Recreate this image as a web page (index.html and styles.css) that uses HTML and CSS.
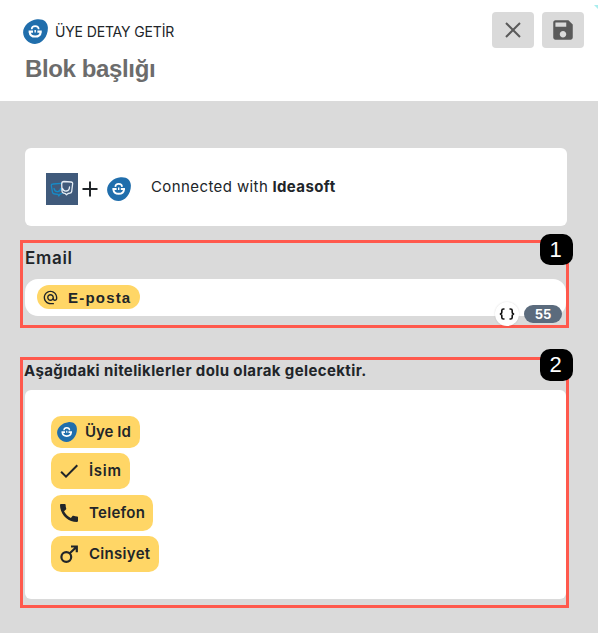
FILE: index.html
```html
<!DOCTYPE html>
<html lang="tr">
<head>
    <meta charset="UTF-8">
    <title>Üye Detay Getir</title>
    <link rel="stylesheet" href="styles.css">
</head>
<body>
    <svg class="sprite">
        <symbol id="ideasoft" viewBox="0 0 24 24">
            <path fill="#206eac" d="M13.500 .2C20 -.4 23.800 3 23.900 8.500C24 17 18 24 11.500 24C5.500 24 .3 19 .1 13C0 6.500 6.500 .8 13.500 .2Z"/>
            <g fill="none" stroke="#fff">
                <path stroke-width="1.600" d="M8.300 9.900C8.500 5.900 14.900 5.900 15.100 9.900"/>
                <path stroke-width="1.400" d="M11.700 10.500v2.500"/>
                <path stroke-width="2" d="M5.400 12.100H9.600M13.800 12.100h4.200M6.400 12.500C7 18.300 16.400 18.300 17 12.500"/>
            </g>
        </symbol>
    </svg>

    <header class="header">
        <div class="header-info">
            <div class="block-type">
                <svg class="block-logo"><use href="#ideasoft"/></svg>
                <span class="block-name">ÜYE DETAY GETİR</span>
            </div>
            <div class="block-title">Blok başlığı</div>
        </div>
        <div class="header-buttons">
            <button class="icon-btn">
                <svg width="24" height="24" viewBox="0 0 24 24"><path d="M5 5l14 14M19 5l-14 14" stroke="#5a5a5a" stroke-width="2" fill="none"/></svg>
            </button>
            <button class="icon-btn">
                <svg width="26" height="26" viewBox="0 0 24 24"><path fill="#5a5a5a" d="M17 3H5c-1.110 0-2 .9-2 2v14c0 1.100.89 2 2 2h14c1.100 0 2-.9 2-2V7l-4-4zm-5 16c-1.660 0-3-1.340-3-3s1.340-3 3-3 3 1.340 3 3-1.340 3-3 3zm3-10H5V5h10v4z"/></svg>
            </button>
        </div>
        <span class="corner"></span>
    </header>

    <main class="content">
        <div class="connection">
            <svg class="app-logo" viewBox="0 0 32 32" fill="none" stroke-linecap="round" stroke-linejoin="round">
                <rect width="32" height="32" fill="#405a7b"/>
                <path stroke="#168bc8" stroke-width="1.300" d="M15 10.300L7 11Q5 11 5.400 13L6.500 19.500Q7 21 9 21L12 21.300L12.800 23L14 21.200L16 20.500M8 15.500Q9 19 12 18.500Q14.500 18 14.500 15.500"/>
                <path stroke="#e5edf5" stroke-width="1.300" d="M18 8.500L25 9Q27 9.300 26.600 11L25.700 18.500Q25.400 20 24 20.200L22 20.500L20.500 21.800L19.500 20.700L17.500 20Q16 19.700 16 18L15.700 11Q15.700 8.500 18 8.500ZM16.500 15.500Q17.500 18.500 20.500 18Q23.500 17.500 23.500 14"/>
            </svg>
            <svg class="plus" viewBox="0 0 16 16"><path d="M8 .5v15M.5 8h15" stroke="#212529" stroke-width="2"/></svg>
            <svg class="connection-logo"><use href="#ideasoft"/></svg>
            <div class="connection-text"><span class="connected">Connected with</span> <b>Ideasoft</b></div>
        </div>

        <section class="frame frame-email">
            <span class="badge">1</span>
            <div class="email-label">Email</div>
            <div class="email-input">
                <span class="email-tag">
                    <svg width="15" height="15" viewBox="1 1 22 22"><path fill="#212529" d="M12 2C6.480 2 2 6.480 2 12s4.480 10 10 10h5v-2h-5c-4.340 0-8-3.660-8-8s3.660-8 8-8 8 3.660 8 8v1.430c0 .79-.71 1.570-1.500 1.570s-1.500-.78-1.500-1.570V12c0-2.760-2.240-5-5-5s-5 2.240-5 5 2.240 5 5 5c1.380 0 2.640-.56 3.540-1.470.65.89 1.770 1.470 2.960 1.470 1.970 0 3.500-1.600 3.500-3.570V12c0-5.520-4.480-10-10-10zm0 13c-1.660 0-3-1.340-3-3s1.340-3 3-3 3 1.340 3 3-1.340 3-3 3z"/></svg>
                    <span>E-posta</span>
                </span>
                <div class="input-tools">
                    <span class="braces">
                        <svg width="16" height="14" viewBox="0 0 16 14"><path d="M5.500 2H4.500Q2.800 2 2.800 3.500V5Q2.800 7 .8 7Q2.800 7 2.800 9v1.500Q2.800 12 4.500 12H5.500M10.500 2h1Q13.200 2 13.200 3.500V5Q13.200 7 15.200 7Q13.200 7 13.200 9v1.500Q13.200 12 11.500 12H10.500" stroke="#111" stroke-width="1.600" fill="none"/></svg>
                    </span>
                    <span class="counter">55</span>
                </div>
            </div>
        </section>

        <section class="frame frame-attributes">
            <span class="badge">2</span>
            <div class="attributes-label">Aşağıdaki niteliklerler dolu olarak gelecektir.</div>
            <div class="attributes">
                <div class="attribute attribute-id">
                    <svg class="attribute-logo"><use href="#ideasoft"/></svg>
                    <span>Üye Id</span>
                </div>
                <div class="attribute attribute-name">
                    <svg class="attribute-icon" viewBox="0 0 24 24"><path fill="#212529" d="M9 16.170L4.830 12l-1.420 1.410L9 19 21 7l-1.410-1.410z"/></svg>
                    <span>İsim</span>
                </div>
                <div class="attribute attribute-phone">
                    <svg class="attribute-icon" viewBox="0 0 24 24"><path fill="#212529" d="M20.010 15.380c-1.230 0-2.420-.2-3.530-.56-.35-.12-.74-.03-1.010.24l-1.570 1.970c-2.830-1.350-5.480-3.900-6.890-6.830l1.950-1.660c.27-.28.35-.67.24-1.020-.37-1.110-.56-2.300-.56-3.530 0-.54-.45-.99-.99-.99H4.190C3.650 3 3 3.240 3 3.990 3 13.280 10.730 21 20.010 21c.71 0 .99-.63.99-1.180v-3.450c0-.54-.45-.99-.99-.99z"/></svg>
                    <span>Telefon</span>
                </div>
                <div class="attribute attribute-gender">
                    <svg class="attribute-icon" viewBox="0 0 24 24"><path d="M12.500 11.500L20 4.500M14 4.500h5.800v5.800" stroke="#212529" stroke-width="2.200" fill="none"/><circle cx="9.300" cy="15" r="4.900" stroke="#212529" stroke-width="2.200" fill="none"/></svg>
                    <span>Cinsiyet</span>
                </div>
            </div>
        </section>
    </main>
</body>
</html>
```
FILE: styles.css
```css
* {
    box-sizing: border-box;
}
body {
    margin: 0;
    height: 633px;
    overflow: hidden;
    background-color: #dadada;
    color: #212529;
    font-family: Inter, "Liberation Sans", sans-serif;
}
svg {
    display: block;
    flex-shrink: 0;
}
.sprite {
    display: none;
}
.header {
    position: relative;
    display: flex;
    justify-content: space-between;
    height: 101px;
    padding: 12px 14px 0 23px;
    background-color: #fff;
}
.header-info {
    padding-top: 7px;
}
.block-type {
    display: flex;
    align-items: center;
    height: 25px;
    gap: 7px;
}
.block-logo {
    width: 25px;
    height: 25px;
}
.block-name {
    font-size: 14px;
    letter-spacing: -0.15px;
}
.block-title {
    margin: 11px 0 0 2px;
    color: #6c6c6c;
    font: bold 24px/28px "Liberation Sans", Arial, sans-serif;
    letter-spacing: -0.37px;
}
.header-buttons {
    display: flex;
    gap: 8px;
}
.icon-btn {
    display: flex;
    align-items: center;
    justify-content: center;
    width: 42px;
    height: 36px;
    padding: 0;
    border: 0;
    border-radius: 4px;
    background-color: #dadada;
}
.corner {
    position: absolute;
    top: 5px;
    right: 0;
    border-top: 4px solid #a9eeee;
    border-left: 4px solid transparent;
}
.content {
    padding: 47px 29px 0 20px;
}
.connection {
    display: flex;
    align-items: center;
    height: 78px;
    margin: 0 2px 0 5px;
    padding: 4px 0 0 21px;
    border-radius: 6px;
    background-color: #fff;
}
.app-logo {
    width: 32px;
    height: 32px;
}
.plus {
    width: 16px;
    height: 16px;
    margin: 0 9px 0 4px;
}
.connection-logo {
    width: 24px;
    height: 24px;
}
.connection-text {
    margin: 0 0 6px 20px;
    font-size: 15px;
    white-space: nowrap;
}
.connected {
    letter-spacing: 0.4px;
}
.connection-text b {
    letter-spacing: 0.4px;
}
.frame {
    position: relative;
    border: 3px solid #ff594d;
}
.frame-email {
    height: 88px;
    margin-top: 14px;
}
.frame-attributes {
    height: 251px;
    margin-top: 29px;
}
.badge {
    position: absolute;
    top: -9px;
    right: -7px;
    display: flex;
    align-items: center;
    justify-content: center;
    width: 33px;
    height: 31px;
    padding-right: 2px;
    border-radius: 10px;
    background-color: #000;
    color: #fff;
    font: 22px "Liberation Sans", Arial, sans-serif;
}
.frame-attributes .badge {
    top: -11px;
    height: 32px;
}
.email-label {
    padding: 4px 0 0 2px;
    font-size: 17px;
    font-weight: 600;
    line-height: 22px;
    letter-spacing: 0.7px;
}
.email-input {
    position: relative;
    height: 37px;
    margin: 10px 0 0 2px;
    padding: 6px 12px;
    border-radius: 13px;
    background-color: #fff;
}
.email-tag {
    display: inline-flex;
    align-items: center;
    gap: 10px;
    width: 103px;
    height: 24px;
    padding-left: 6px;
    border-radius: 12px;
    background-color: #ffd666;
    font: bold 15px "Liberation Sans", Arial, sans-serif;
    letter-spacing: 1.2px;
}
.input-tools {
    position: absolute;
    top: 23px;
    right: 4px;
    display: flex;
    align-items: center;
    gap: 5px;
}
.braces {
    display: flex;
    align-items: center;
    justify-content: center;
    width: 24px;
    height: 24px;
    border-radius: 50%;
    background-color: #fff;
    box-shadow: 0 0 2px rgba(0, 0, 0, 0.15);
}
.counter {
    width: 38px;
    height: 18px;
    border-radius: 9px;
    background-color: #5b6b7d;
    color: #fff;
    font-size: 13px;
    font-weight: 700;
    line-height: 18px;
    text-align: center;
}
.attributes-label {
    padding-left: 1px;
    font-size: 15px;
    font-weight: 700;
    line-height: 22px;
    white-space: nowrap;
    letter-spacing: 0.38px;
}
.attributes {
    display: flex;
    flex-direction: column;
    align-items: flex-start;
    gap: 5px;
    height: 209px;
    margin: 8px 0 0 2px;
    padding: 26px;
    border-radius: 6px;
    background-color: #fff;
}
.attribute {
    display: flex;
    flex-shrink: 0;
    align-items: center;
    gap: 8px;
    height: 36px;
    padding-left: 6px;
    border-radius: 10px;
    background-color: #ffd666;
    font-size: 15px;
    font-weight: 600;
    white-space: nowrap;
    letter-spacing: 0.3px;
}
.attribute span {
    padding-bottom: 1px;
}
.attribute-id {
    width: 89px;
    height: 32px;
    letter-spacing: 0;
}
.attribute-name {
    width: 79px;
    letter-spacing: 0.7px;
}
.attribute-phone {
    width: 102px;
    margin-top: 1px;
}
.attribute-gender {
    width: 108px;
}
.attribute-logo {
    width: 20px;
    height: 20px;
}
.attribute-icon {
    width: 24px;
    height: 24px;
}
```
